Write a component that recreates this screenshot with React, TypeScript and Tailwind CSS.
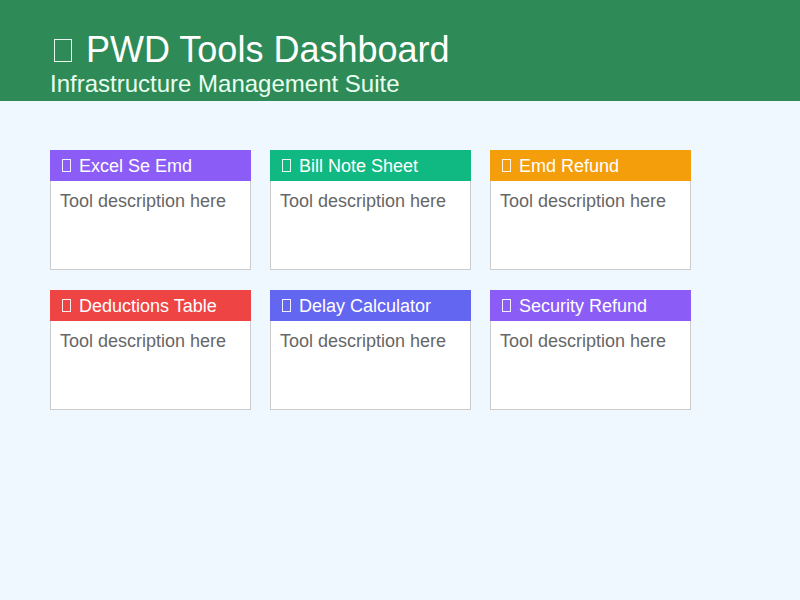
import React from 'react';

type Tool = {
  name: string;
  color: string;
};

const tools: Tool[] = [
  { name: 'Excel Se Emd', color: 'bg-[#8b5cf6]' },
  { name: 'Bill Note Sheet', color: 'bg-[#10b981]' },
  { name: 'Emd Refund', color: 'bg-[#f59e0b]' },
  { name: 'Deductions Table', color: 'bg-[#ef4444]' },
  { name: 'Delay Calculator', color: 'bg-[#6366f1]' },
  { name: 'Security Refund', color: 'bg-[#8b5cf6]' },
];

// missing-glyph box, as the icons show up in the screenshot
const Tofu: React.FC<{ className: string }> = ({ className }) => (
  <span className={`inline-block border border-current opacity-90 ${className}`} />
);

const ToolCard: React.FC<{ tool: Tool }> = ({ tool }) => (
  <div className="w-[201px] h-[120px] flex flex-col bg-white">
    <div className={`${tool.color} h-[31px] px-[10px] pt-[6px] text-white text-[18px] leading-[21px]`}>
      <Tofu className="w-[9px] h-[13px] ml-[2px] mr-[8px]" />
      {tool.name}
    </div>
    <div className="flex-1 border-x border-b border-[#cccccc] px-[9px] pt-[10px] text-[18px] leading-[21px] text-[#666666]">
      Tool description here
    </div>
  </div>
);

const App: React.FC = () => {
  return (
    <div className="min-h-screen bg-[#f0f8ff] font-['Liberation_Sans',Arial,sans-serif]">
      <header className="bg-[#2e8b57] text-white px-[50px] pt-[33px] pb-[3px]">
        <h1 className="text-[36px] leading-[34px]">
          <Tofu className="w-[18px] h-[23px] ml-[4px] mr-[14px]" />
          PWD Tools Dashboard
        </h1>
        <p className="mt-[3px] text-[24px] leading-[28px] text-[#e8fff0]">Infrastructure Management Suite</p>
      </header>

      <main className="px-[50px] pt-[49px]">
        <div className="grid grid-cols-[201px_201px_201px] gap-x-[19px] gap-y-[20px]">
          {tools.map(tool => (
            <ToolCard key={tool.name} tool={tool} />
          ))}
        </div>
      </main>
    </div>
  );
};

export default App;
